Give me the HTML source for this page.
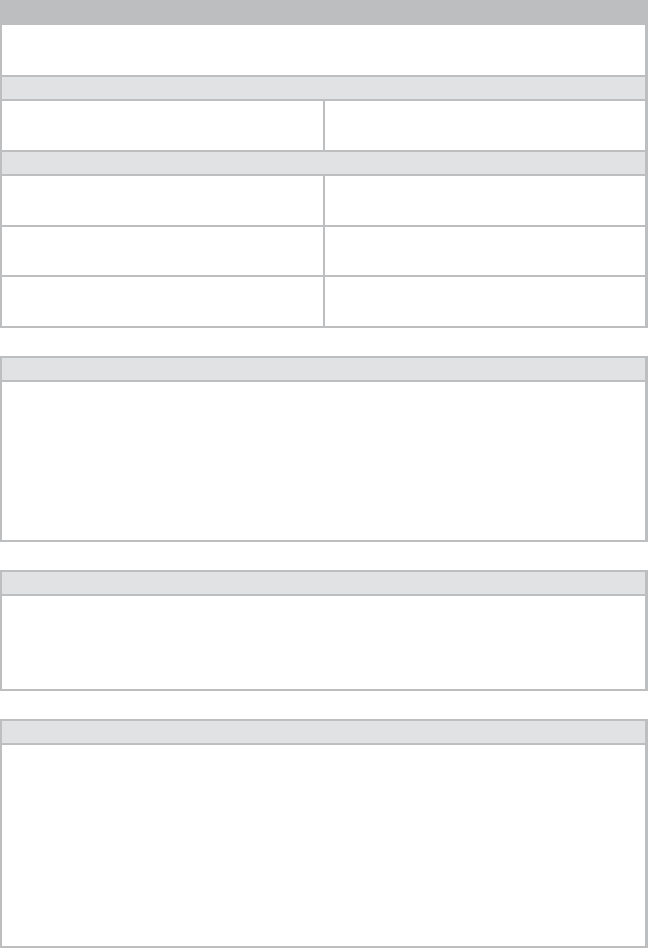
<!DOCTYPE html>
<html><head><style>
html,body{margin:0;padding:0;width:648px;height:949px;background:#fff;overflow:hidden}
div{position:absolute}
.l{background:#bdbec0}
.g{background:#e1e2e4}
</style></head><body>
<div class="l" style="left:0;top:0;width:648px;height:25px"></div>
<!-- box 1 -->
<div class="l" style="left:0;top:25px;width:2px;height:303px"></div>
<div class="l" style="left:645px;top:25px;width:3px;height:303px"></div>
<div class="l" style="left:0;top:75px;width:648px;height:2px"></div>
<div class="g" style="left:2px;top:77px;width:643px;height:22px"></div>
<div class="l" style="left:0;top:99px;width:648px;height:2px"></div>
<div class="l" style="left:0;top:150px;width:648px;height:2px"></div>
<div class="g" style="left:2px;top:152px;width:643px;height:22px"></div>
<div class="l" style="left:0;top:174px;width:648px;height:2px"></div>
<div class="l" style="left:0;top:225px;width:648px;height:2px"></div>
<div class="l" style="left:0;top:275px;width:648px;height:2px"></div>
<div class="l" style="left:0;top:326px;width:648px;height:2px"></div>
<div class="l" style="left:323px;top:101px;width:2px;height:49px"></div>
<div class="l" style="left:323px;top:176px;width:2px;height:150px"></div>
<!-- box 2 -->
<div class="l" style="left:0;top:356px;width:648px;height:186px"></div>
<div class="g" style="left:2px;top:358px;width:643px;height:22px"></div>
<div style="left:2px;top:382px;width:643px;height:158px;background:#fff"></div>
<!-- box 3 -->
<div class="l" style="left:0;top:570px;width:648px;height:121px"></div>
<div class="g" style="left:2px;top:572px;width:643px;height:22px"></div>
<div style="left:2px;top:596px;width:643px;height:93px;background:#fff"></div>
<!-- box 4 -->
<div class="l" style="left:0;top:719px;width:648px;height:229px"></div>
<div class="g" style="left:2px;top:721px;width:643px;height:22px"></div>
<div style="left:2px;top:745px;width:643px;height:201px;background:#fff"></div>
</body></html>
